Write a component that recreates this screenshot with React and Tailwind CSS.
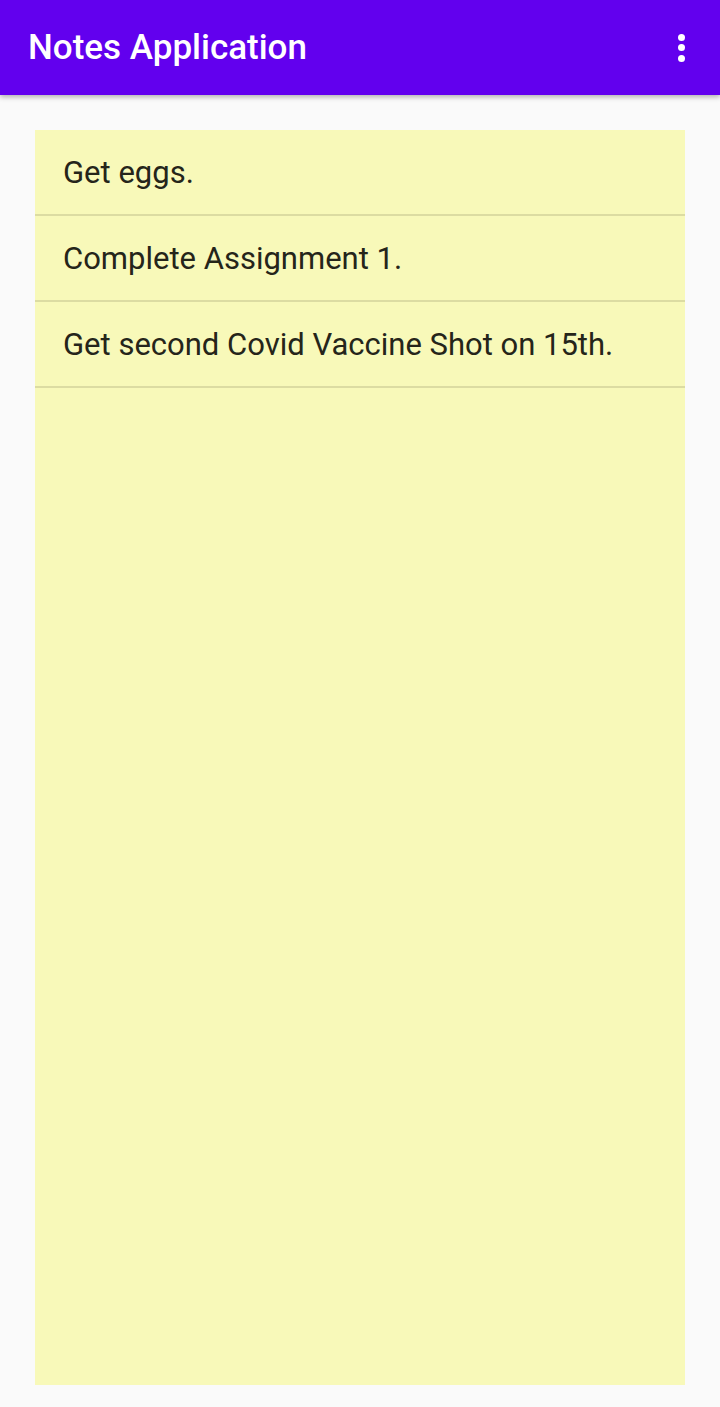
import React from "react";

const notes = [
  "Get eggs.",
  "Complete Assignment 1.",
  "Get second Covid Vaccine Shot on 15th.",
];

export default function App() {
  return (
    <div
      className="flex h-[1407px] w-[720px] flex-col bg-[#fafafa]"
      style={{ fontFamily: "Roboto, 'Noto Sans', sans-serif" }}
    >
      {/* app bar */}
      <header className="relative z-10 flex h-[95px] shrink-0 items-center justify-between bg-[#6200ee] pl-[28px] pr-[35px] shadow-[0_2px_5px_rgba(0,0,0,0.3)]">
        <h1 className="pt-[2px] text-[35px] font-medium text-white">Notes Application</h1>
        <div className="flex flex-col items-center gap-[3.5px]">
          <span className="h-[7px] w-[7px] rounded-full bg-white" />
          <span className="h-[7px] w-[7px] rounded-full bg-white" />
          <span className="h-[7px] w-[7px] rounded-full bg-white" />
        </div>
      </header>

      <main className="flex flex-1 px-[35px] pt-[35px] pb-[22px]">
        <ul className="flex-1 bg-[#f8f9b9]">
          {notes.map((note) => (
            <li
              key={note}
              className="flex h-[86px] items-center border-b-2 border-[#dcdca2] pt-[3px] pl-[28px] text-[31px] text-[#25251a]"
            >
              {note}
            </li>
          ))}
        </ul>
      </main>
    </div>
  );
}
